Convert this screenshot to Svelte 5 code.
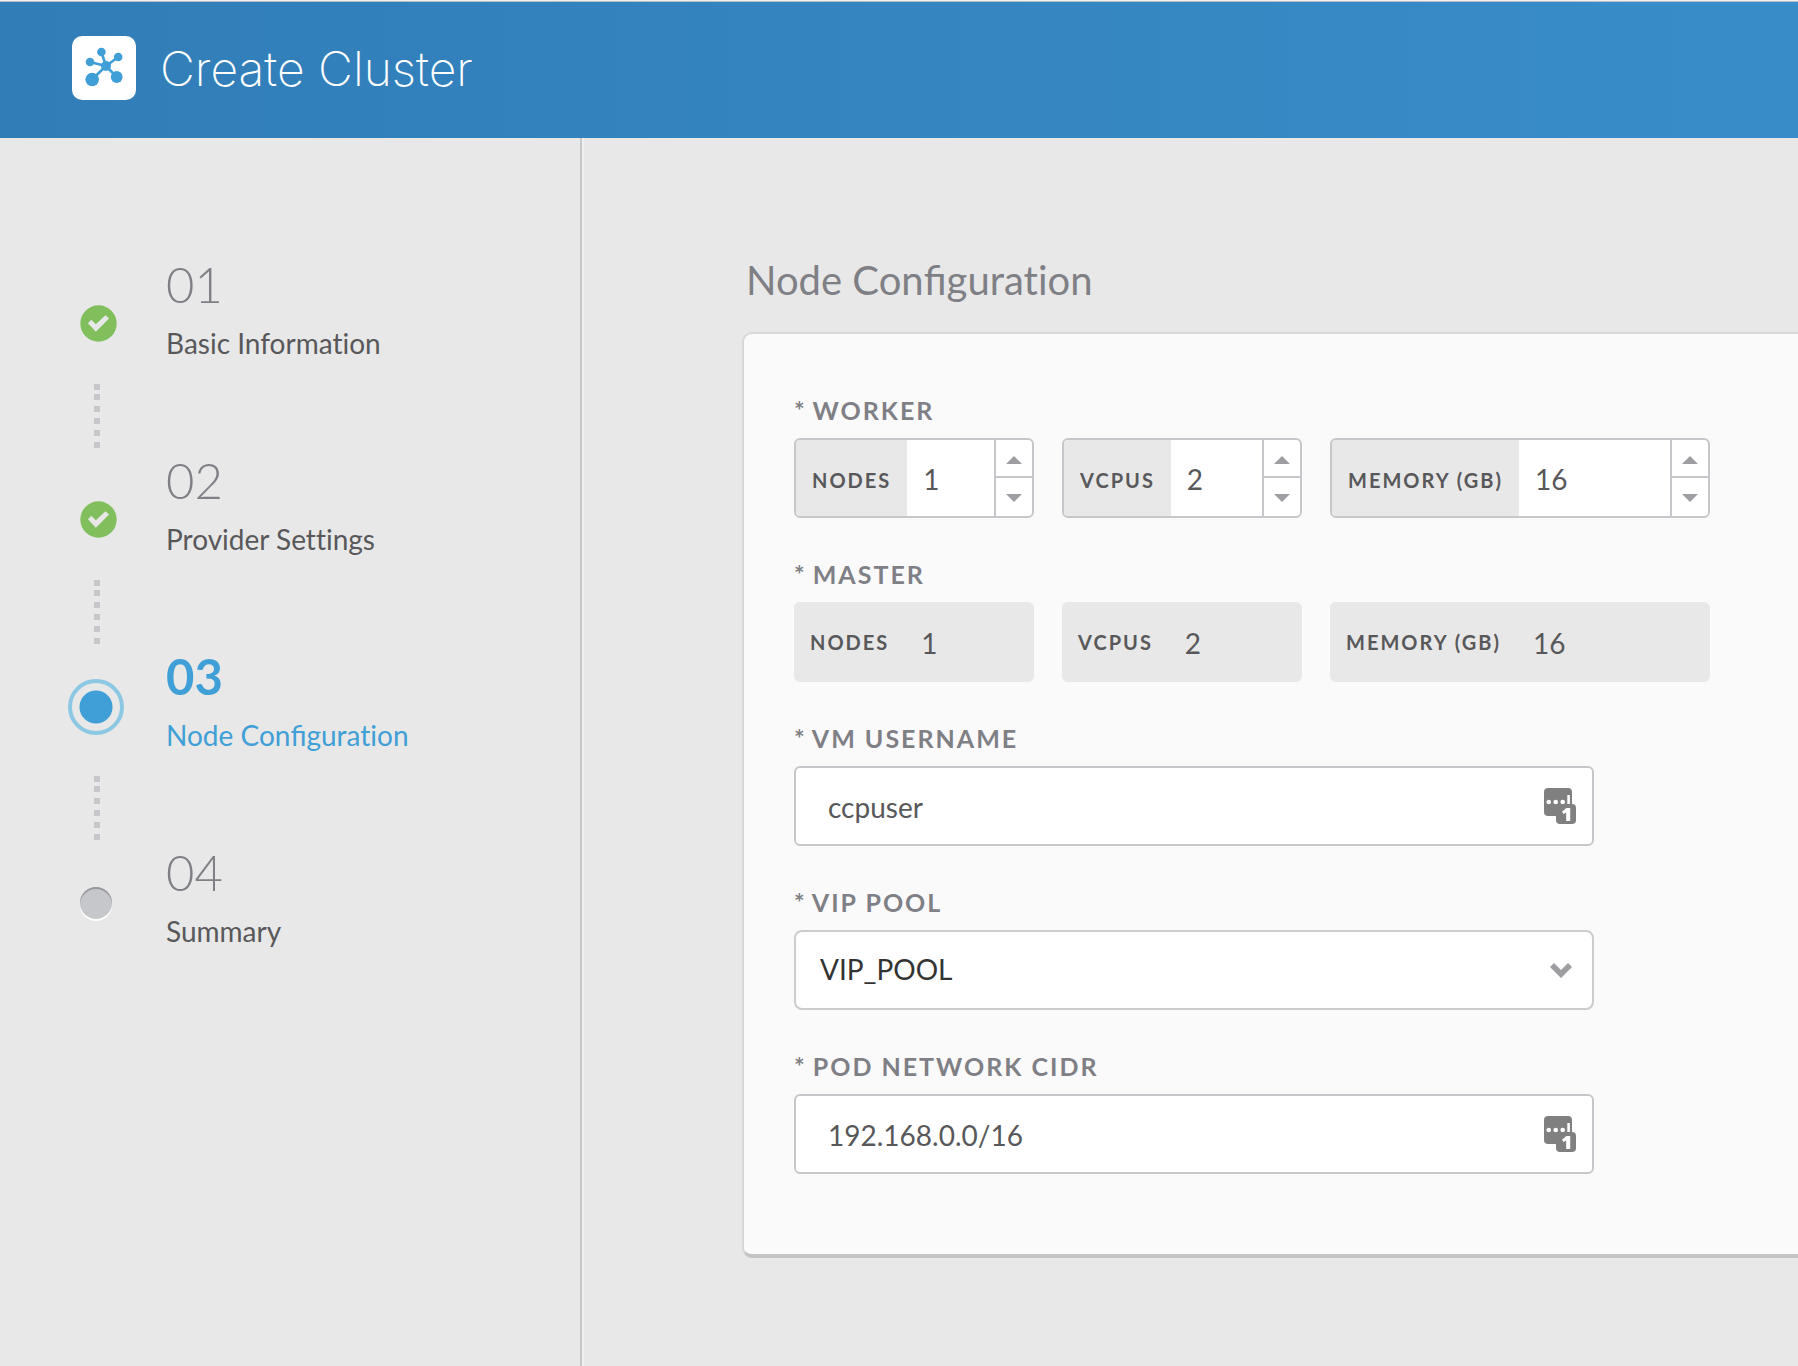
<script>
  const steps = [
    { number: '01', title: 'Basic Information', state: 'done' },
    { number: '02', title: 'Provider Settings', state: 'done' },
    { number: '03', title: 'Node Configuration', state: 'active' },
    { number: '04', title: 'Summary', state: 'todo' }
  ];

  let worker = $state([
    { id: 'nodes', label: 'NODES', value: 1 },
    { id: 'vcpus', label: 'VCPUS', value: 2 },
    { id: 'memory', label: 'MEMORY (GB)', value: 16, wide: true }
  ]);

  const master = [
    { id: 'nodes', label: 'NODES', value: 1 },
    { id: 'vcpus', label: 'VCPUS', value: 2 },
    { id: 'memory', label: 'MEMORY (GB)', value: 16, wide: true }
  ];

  let username = $state('ccpuser');
  let pool = $state('VIP_POOL');
  let cidr = $state('192.168.0.0/16');
</script>

<!-- Only the "fi" pair is set as a ligature -->
{#snippet ligated(text)}
  {#each text.split('fi') as part, i}{#if i > 0}<span class="lig">fi</span>{/if}{part}{/each}
{/snippet}

{#snippet keyIcon()}
  <svg class="key" viewBox="0 0 32 36" aria-hidden="true">
    <rect x="0" y="0" width="28" height="28" rx="4" />
    <g fill="#fff">
      <circle cx="4.7" cy="14" r="2.3" />
      <circle cx="11.7" cy="14" r="2.3" />
      <circle cx="18.7" cy="14" r="2.3" />
      <rect x="23.3" y="7" width="2.6" height="10" />
    </g>
    <rect x="12" y="16" width="20" height="20" rx="4" />
    <path fill="#fff" d="M22.4 20h3.8v13h-4v-8.6l-2.6 1.7-1.6-2.4z" />
  </svg>
{/snippet}

<div class="page">
  <header>
    <svg class="logo" viewBox="0 0 64 64" aria-hidden="true">
      <rect width="64" height="64" rx="10" fill="#fff" />
      <g stroke="#3f9fd6" stroke-width="2.6">
        <path d="M34 30L29.4 16M34 30L46.2 21M34 30L18 26M34 30L20 43.5M34 30L44.7 41" />
      </g>
      <g fill="#3f9fd6">
        <circle cx="34" cy="30" r="5" />
        <circle cx="29.4" cy="16" r="4.3" />
        <circle cx="46.2" cy="21" r="4.3" />
        <circle cx="18" cy="26" r="4.3" />
        <circle cx="20.2" cy="43.5" r="6.8" />
        <circle cx="44.7" cy="41" r="5.9" />
      </g>
    </svg>
    <h1>Create Cluster</h1>
  </header>

  <div class="body">
    <nav aria-label="Steps">
      <ol>
        {#each steps as step, i}
          <li class={step.state}>
            <div class="marker">
              <div class="slot">
                {#if step.state === 'done'}
                  <svg class="check" viewBox="88 196 112 112" aria-hidden="true">
                    <circle cx="144" cy="252" r="55" fill="#80bf5c" />
                    <path d="M112 251l10-10 14 13 29-27 11 10-40 40z" fill="#e8e8e8" />
                  </svg>
                {:else}
                  <span class="bullet"></span>
                {/if}
              </div>
              {#if i < steps.length - 1}
                <svg class="dots" viewBox="0 0 6 64" aria-hidden="true">
                  {#each [0, 10, 22, 34, 46, 58] as y}
                    <rect x="0" {y} width="6" height="6" />
                  {/each}
                </svg>
              {/if}
            </div>
            <div class="text">
              <span class="number">{step.number}</span>
              <span class="title">{@render ligated(step.title)}</span>
            </div>
          </li>
        {/each}
      </ol>
    </nav>

    <main>
      <h2>{@render ligated('Node Configuration')}</h2>
      <form class="card">
        <fieldset>
          <legend><span>*</span> WORKER</legend>
          <div class="row">
            {#each worker as f}
              <div class="stepper" class:wide={f.wide}>
                <label for="worker-{f.id}">{f.label}</label>
                <input id="worker-{f.id}" type="number" bind:value={f.value} />
                <div class="spin">
                  <button type="button" aria-label="Increase" onclick={() => (f.value += 1)}>
                    <svg viewBox="0 0 16 8"><path d="M0 8L8 0l8 8z" /></svg>
                  </button>
                  <button type="button" aria-label="Decrease" onclick={() => (f.value -= 1)}>
                    <svg viewBox="0 0 16 8"><path d="M0 0h16L8 8z" /></svg>
                  </button>
                </div>
              </div>
            {/each}
          </div>
        </fieldset>

        <fieldset>
          <legend><span>*</span> MASTER</legend>
          <div class="row">
            {#each master as f}
              <div class="stepper fixed" class:wide={f.wide}>
                <label for="master-{f.id}">{f.label}</label>
                <input id="master-{f.id}" type="number" value={f.value} readonly />
              </div>
            {/each}
          </div>
        </fieldset>

        <div class="field">
          <label class="caption" for="username"><span>*</span> VM USERNAME</label>
          <div class="box">
            <input id="username" type="text" bind:value={username} />
            {@render keyIcon()}
          </div>
        </div>

        <div class="field">
          <label class="caption" for="pool"><span>*</span> VIP POOL</label>
          <div class="box select">
            <select id="pool" bind:value={pool}>
              <option>VIP_POOL</option>
            </select>
            <svg class="chevron" viewBox="0 0 22 15" aria-hidden="true">
              <path d="M0 4l4-4 7 7 7-7 4 4-11 11z" />
            </svg>
          </div>
        </div>

        <div class="field">
          <label class="caption" for="cidr"><span>*</span> POD NETWORK CIDR</label>
          <div class="box">
            <input id="cidr" type="text" bind:value={cidr} />
            {@render keyIcon()}
          </div>
        </div>
      </form>
    </main>
  </div>
</div>

<style>
  :global(body) {
    margin: 0;
    background: #e8e8e8;
  }

  .page {
    min-height: 100vh;
    display: flex;
    flex-direction: column;
    overflow-x: hidden;
    font-family: Lato, 'Liberation Sans', sans-serif;
    font-size: 28px;
    line-height: 34px;
    color: #58585b;
    font-variant-ligatures: no-common-ligatures;
  }

  .lig {
    font-variant-ligatures: common-ligatures;
  }

  * {
    box-sizing: border-box;
  }

  header {
    height: 138px;
    padding: 0 72px 4px;
    display: flex;
    align-items: center;
    gap: 24px;
    border-top: 1px solid #f0f0f0;
    box-shadow: inset 0 1px 0 #b9c0c5;
    background: linear-gradient(90deg, #317db8, #388dc8);
    color: #fff;
  }

  .logo {
    width: 64px;
    height: 64px;
  }

  h1 {
    margin: 0;
    padding-top: 2px;
    font-family: Inter, 'Liberation Sans', sans-serif;
    font-size: 48px;
    line-height: 60px;
    font-weight: 200;
  }

  .body {
    flex: 1;
    display: flex;
  }

  nav {
    flex: none;
    width: 582px;
    padding: 116px 20px 0 68px;
    border-right: 2px solid #c6c7ca;
  }

  ol {
    margin: 0;
    padding: 0;
    list-style: none;
  }

  li {
    height: 196px;
    display: flex;
    gap: 42px;
  }

  .marker {
    width: 56px;
    display: flex;
    flex-direction: column;
    align-items: center;
    gap: 8px;
  }

  .slot {
    height: 122px;
    display: flex;
    align-items: center;
  }

  .done .slot {
    padding: 16px 0 0 4px;
  }

  .check {
    width: 37px;
    height: 37px;
  }

  .dots {
    width: 6px;
    height: 64px;
    margin-left: 2px;
    fill: #c6c7ca;
  }

  .bullet {
    width: 32px;
    height: 32px;
    border-radius: 50%;
    background: #c6c7ca;
    box-shadow: inset 0 2px 0 #97989b, 0 2px 0 #fff;
  }

  .active .bullet {
    width: 56px;
    height: 56px;
    border: 4px solid #8cc8e4;
    background: radial-gradient(circle, #3f9fd6 16px, transparent 17px);
    box-shadow: none;
  }

  .text {
    display: flex;
    flex-direction: column;
    gap: 12px;
  }

  .number {
    font-size: 49px;
    line-height: 60px;
    font-weight: 300;
    color: #7f7f86;
  }

  .active .number {
    font-weight: 700;
    color: #3f9fd6;
  }

  .active .title {
    color: #3f9fd6;
  }

  main {
    flex: 1;
    min-width: 0;
    padding: 118px 0 0 160px;
    border-left: 2px solid #f0f0f0;
  }

  h2 {
    margin: 0 0 28px 2px;
    font-size: 40px;
    line-height: 48px;
    font-weight: 400;
    color: #7f7f86;
  }

  .card {
    margin: 0 -20px 100px -2px;
    padding: 62px 50px 80px;
    display: flex;
    flex-direction: column;
    gap: 42px;
    border: 2px solid #d8d8d8;
    border-bottom: 4px solid #c4c4c4;
    border-radius: 10px;
    background: #fafafa;
  }

  fieldset {
    margin: 0;
    padding: 0;
    border: 0;
    min-width: 0;
  }

  legend,
  .caption {
    display: block;
    padding: 0 0 14px;
    font-size: 25px;
    line-height: 28px;
    font-weight: 700;
    letter-spacing: 2px;
    color: #7f7f86;
  }

  legend span,
  .caption span {
    letter-spacing: 0;
  }

  .row {
    display: flex;
    gap: 28px;
  }

  .stepper {
    width: 240px;
    height: 80px;
    display: flex;
    overflow: hidden;
    border: 2px solid #c6c7ca;
    border-radius: 6px;
    background: #fff;
  }

  .stepper.wide {
    width: 380px;
  }

  .stepper label {
    flex: none;
    padding: 4px 16px 0;
    display: flex;
    align-items: center;
    background: #e8e8e8;
    font-size: 20px;
    line-height: 24px;
    font-weight: 700;
    letter-spacing: 2px;
  }

  input,
  select {
    flex: 1;
    width: 0;
    min-width: 0;
    margin: 0;
    border: 0;
    outline: 0;
    background: none;
    font: inherit;
    color: inherit;
    appearance: none;
  }

  .stepper input {
    padding: 2px 16px 0;
    appearance: textfield;
  }

  .spin {
    flex: none;
    width: 38px;
    display: grid;
    grid-template-rows: 1fr 1fr;
    border-left: 2px solid #c6c7ca;
  }

  .spin button {
    margin: 0;
    padding: 4px 0 0;
    display: flex;
    align-items: center;
    justify-content: center;
    border: 0;
    background: none;
  }

  .spin button:first-child {
    border-bottom: 2px solid #c6c7ca;
  }

  .spin button:last-child {
    padding-top: 2px;
  }

  .spin svg {
    width: 16px;
    height: 8px;
    fill: #9e9ea2;
  }

  .stepper.fixed {
    border: 0;
    background: #e8e8e8;
  }

  .stepper.fixed label {
    padding-top: 0;
  }

  .box {
    max-width: 800px;
    height: 80px;
    display: flex;
    align-items: center;
    border: 2px solid #c6c7ca;
    border-radius: 6px;
    background: #fff;
    position: relative;
  }

  .box input {
    height: 100%;
    padding: 2px 64px 0 32px;
  }

  .select {
    border-color: #ccc;
    border-radius: 8px;
    color: #333;
  }

  .select select {
    height: 100%;
    padding: 0 64px 2px 24px;
  }

  .key {
    position: absolute;
    right: 16px;
    width: 32px;
    height: 36px;
    fill: #808080;
  }

  .chevron {
    position: absolute;
    right: 20px;
    width: 22px;
    height: 15px;
    fill: #9e9ea2;
    pointer-events: none;
  }
</style>
